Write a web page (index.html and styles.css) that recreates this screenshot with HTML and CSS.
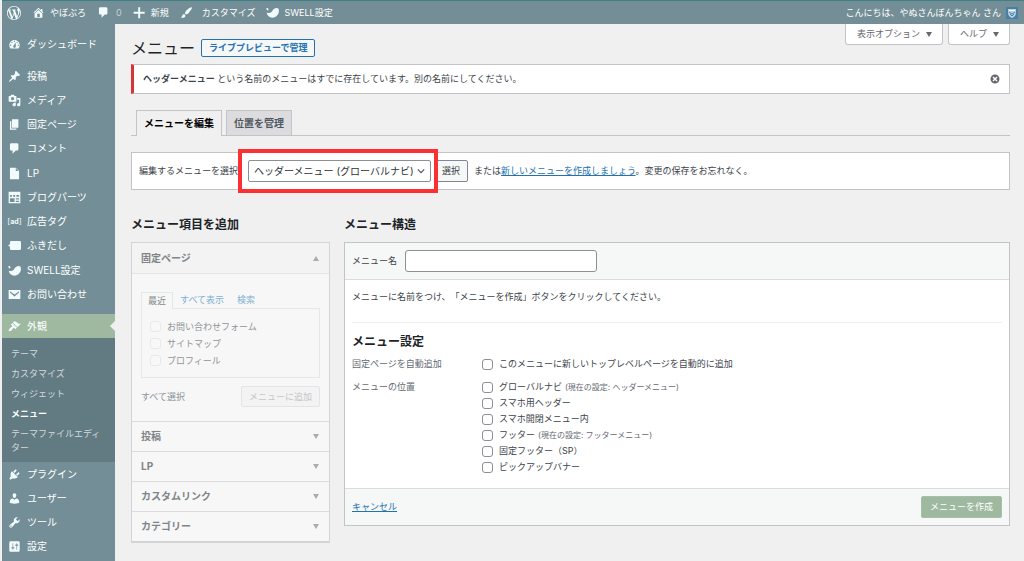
FILE: index.html
```html
<!DOCTYPE html>
<html lang="ja">
<head>
<meta charset="utf-8">
<title>メニュー</title>
<link rel="stylesheet" href="styles.css">
</head>
<body>
<svg class="sprite" aria-hidden="true">
  <symbol id="swell" viewBox="0 0 20 20"><path d="M0 4l3-1 1 3-2 1zM1 10c4 2 8 0 9-3 2-3 6-5 9-3 3 6-2 14-9 14-5 0-8-3-9-8z"/></symbol>
  <symbol id="comment" viewBox="0 0 20 20"><path d="M5 2h9c1.1 0 2 .9 2 2v7c0 1.1-.9 2-2 2h-2l-5 5v-5H5c-1.1 0-2-.9-2-2V4c0-1.1.9-2 2-2z"/></symbol>
</svg>
<header class="adminbar">
  <a class="bar-item" href="#" aria-label="WordPress"><svg class="icon icon-wp" viewBox="0 0 20 20"><path d="M20 10c0-5.51-4.49-10-10-10C4.48 0 0 4.49 0 10c0 5.52 4.48 10 10 10 5.51 0 10-4.48 10-10zM7.78 15.37L4.37 6.22c.55-.02 1.17-.08 1.17-.08.5-.06.44-1.13-.06-1.11 0 0-1.45.11-2.37.11-.18 0-.37 0-.58-.01C4.12 2.69 6.87 1.11 10 1.11c2.33 0 4.45.87 6.05 2.34-.68-.11-1.65.39-1.65 1.58 0 .74.45 1.36.9 2.1.35.61.55 1.36.55 2.46 0 1.49-1.4 5-1.4 5l-3.03-8.37c.54-.02.82-.17.82-.17.5-.05.44-1.25-.06-1.22 0 0-1.44.12-2.38.12-.87 0-2.33-.12-2.33-.12-.5-.03-.56 1.2-.06 1.22l.92.08 1.26 3.41zM17.41 10c.24-.64.74-1.87.43-4.25.7 1.29 1.05 2.71 1.05 4.25 0 3.29-1.73 6.24-4.4 7.78.97-2.59 1.94-5.2 2.92-7.78zM6.1 18.09C3.12 16.65 1.11 13.53 1.11 10c0-1.3.23-2.48.72-3.59C3.25 10.3 4.67 14.2 6.1 18.09zm4.03-6.63l2.58 6.98c-.86.29-1.76.45-2.71.45-.79 0-1.57-.11-2.29-.33.81-2.38 1.62-4.74 2.42-7.1z"/></svg></a>
  <a class="bar-item" href="#"><svg class="icon" viewBox="0 0 20 20"><path d="M16 8.5l1.53 1.53-1.06 1.06L10 4.6l-6.47 6.49-1.06-1.06L10 2.5l4 4v-2h2v4zm-6-2.46l6 5.99V18H4v-5.97zM12 17v-5H8v5h4z"/></svg>やぼぶろ</a>
  <a class="bar-item bar-comments" href="#"><svg class="icon"><use href="#comment"/></svg>0</a>
  <a class="bar-item" href="#"><svg class="icon" viewBox="0 0 20 20"><path d="M8 2h3v7h7v3h-7v7H8v-7H1V9h7z"/></svg>新規</a>
  <a class="bar-item bar-customize" href="#"><svg class="icon" viewBox="0 0 20 20"><path d="M18.33 3.57s.27-.8-.31-1.36c-.53-.52-1.22-.24-1.22-.24-.61.3-5.76 3.47-7.67 5.57-.86.96-2.06 3.79-1.09 4.82.92.98 3.96-.17 4.79-1 2.06-2.06 5.21-7.17 5.5-7.79zM1.4 17.65c2.37-1.56 1.46-3.41 3.23-4.64.93-.65 2.22-.62 3.08.29.63.67.8 2.57-.16 3.46-1.57 1.45-4 1.55-6.15.89z"/></svg>カスタマイズ</a>
  <a class="bar-item" href="#"><svg class="icon"><use href="#swell"/></svg>SWELL設定</a>
  <a class="bar-item bar-account" href="#">こんにちは、やぬさんぼんちゃん さん<svg class="avatar" viewBox="0 0 12 12"><rect width="12" height="12" fill="#477fa8"/><path d="M2 2h8v3c0 3-1 5-4 6C3 10 2 8 2 5z" fill="#b9d3df"/><path d="M3 3h6v1H3z" fill="#fff"/><path d="M3 5l3 2 3-2M4 7l2 2 2-2" fill="none" stroke="#477fa8"/></svg></a>
</header>
<div class="layout">
  <nav class="sidebar" aria-label="メインメニュー">
    <ul class="group">
      <li><a href="#"><svg class="icon" viewBox="0 0 20 20"><path d="M3.76 16h12.48c1.1-1.37 1.76-3.11 1.76-5 0-4.42-3.58-8-8-8s-8 3.58-8 8c0 1.89.66 3.63 1.76 5zM10 4c.55 0 1 .45 1 1s-.45 1-1 1-1-.45-1-1 .45-1 1-1zM6 6c.55 0 1 .45 1 1s-.45 1-1 1-1-.45-1-1 .45-1 1-1zm8 0c.55 0 1 .45 1 1s-.45 1-1 1-1-.45-1-1 .45-1 1-1zm-5.37 5.55L12 7v6c0 1.1-.9 2-2 2s-2-.9-2-2c0-.57.24-1.08.63-1.45zM4 10c.55 0 1 .45 1 1s-.45 1-1 1-1-.45-1-1 .45-1 1-1zm12 0c.55 0 1 .45 1 1s-.45 1-1 1-1-.45-1-1 .45-1 1-1z"/></svg>ダッシュボード</a></li>
    </ul>
    <div class="content-groups">
    <ul class="group">
      <li><a href="#"><svg class="icon" viewBox="0 0 20 20"><path d="M10.44 3.02l1.82-1.82 6.36 6.35-1.83 1.82c-1.05-.68-2.48-.57-3.41.36l-.75.75c-.92.93-1.04 2.35-.35 3.41l-1.83 1.82-2.41-2.41-2.8 2.79c-.42.42-3.38 2.71-3.8 2.29s1.86-3.39 2.28-3.81l2.79-2.79L4.1 9.36l1.83-1.82c1.05.69 2.48.57 3.4-.36l.75-.75c.93-.92 1.05-2.35.36-3.41z"/></svg>投稿</a></li>
      <li><a href="#"><svg class="icon" viewBox="0 0 20 20"><path d="M13 11V4c0-.55-.45-1-1-1h-1.67L9 1H5L3.67 3H2c-.55 0-1 .45-1 1v7c0 .55.45 1 1 1h10c.55 0 1-.45 1-1zM7 4.5c1.38 0 2.5 1.12 2.5 2.5S8.38 9.5 7 9.5 4.5 8.38 4.5 7 5.62 4.5 7 4.5zM14 6h5v10.5c0 1.38-1.12 2.5-2.5 2.5S14 17.88 14 16.5s1.12-2.5 2.5-2.5c.17 0 .34.02.5.05V9h-3V6zm-4 8.05V13h2v3.5c0 1.38-1.12 2.5-2.5 2.5S7 17.88 7 16.5 8.12 14 9.5 14c.17 0 .34.02.5.05z"/></svg>メディア</a></li>
      <li><a href="#"><svg class="icon" viewBox="0 0 20 20"><path d="M6 15V2h10v13H6zm-1 1h8v2H3V5h2v11z"/></svg>固定ページ</a></li>
      <li><a href="#"><svg class="icon"><use href="#comment"/></svg>コメント</a></li>
    </ul>
    <ul class="group">
      <li><a href="#"><svg class="icon" viewBox="0 0 20 20"><path fill-rule="evenodd" d="M12 1l5 5v13H3V1h9zm0 5h4l-4-4v4z"/></svg>LP</a></li>
      <li><a href="#"><svg class="icon" viewBox="0 0 20 20"><path fill-rule="evenodd" d="M1 1h18v18H1zM3 6v3h3V6zm5 0v3h3V6zm5 0v3h4V6zM3 11v6h7v-6zm9 0v2h5v-2zm0 4v2h5v-2z"/></svg>ブログパーツ</a></li>
      <li><a href="#"><span class="icon ad-mark">[<b>ad</b>]</span>広告タグ</a></li>
      <li><a href="#"><svg class="icon" viewBox="0 0 20 20"><path d="M5 3h13q2 0 2 2v10q0 2-2 2H5q-2 0-2-2v-3L0 10l3-2V5q0-2 2-2z"/></svg>ふきだし</a></li>
    </ul>
    <ul class="group">
      <li><a href="#"><svg class="icon"><use href="#swell"/></svg>SWELL設定</a></li>
      <li><a href="#"><svg class="icon" viewBox="0 0 20 20"><path fill-rule="evenodd" d="M1 3h18v14H1zM3 5v2l7 6 7-6V5l-7 5z"/></svg>お問い合わせ</a></li>
    </ul>
    </div>
    <a class="current" href="#"><svg class="icon" viewBox="0 0 20 20"><path d="M14.48 11.06L7.41 3.99l1.5-1.5c.5-.56 2.3-.47 3.51.32 1.21.8 1.43 1.28 2.91 2.1 1.18.64 2.45 1.26 4.45.85zm-.71.71L6.7 4.7 4.93 6.47c-.39.39-.39 1.02 0 1.41l1.06 1.06c.39.39.39 1.03 0 1.42-.6.6-1.43 1.11-2.21 1.69-.35.26-.7.53-1.01.84C1.43 14.23.4 16.08 1.4 17.07c.99 1 2.84-.03 4.18-1.36.31-.31.58-.66.85-1.02.57-.78 1.08-1.61 1.69-2.21.39-.39 1.02-.39 1.41 0l1.06 1.06c.39.39 1.02.39 1.41 0z"/></svg>外観</a>
    <ul class="submenu">
      <li><a href="#">テーマ</a></li>
      <li><a href="#">カスタマイズ</a></li>
      <li><a href="#">ウィジェット</a></li>
      <li><a class="active" href="#">メニュー</a></li>
      <li><a href="#">テーマファイルエディター</a></li>
    </ul>
    <ul class="group">
      <li><a href="#"><svg class="icon" viewBox="0 0 20 20"><path d="M13.11 4.36L9.87 7.6 8 5.73l3.24-3.24c.35-.34 1.05-.2 1.56.32.52.51.66 1.21.31 1.55zm-8 1.77l.91-1.12 9.01 9.01-1.19.84c-.71.71-2.63 1.16-3.82 1.16H6.14L4.9 17.26c-.59.59-1.54.59-2.12 0-.59-.58-.59-1.53 0-2.12l1.24-1.24v-3.88c0-1.13.4-3.19 1.09-3.89zm7.26 3.97l3.24-3.24c.34-.35 1.04-.21 1.55.31.52.51.66 1.21.31 1.55l-3.24 3.25z"/></svg>プラグイン</a></li>
      <li><a href="#"><svg class="icon" viewBox="0 0 20 20"><path d="M10 9.25c-2.27 0-2.73-3.44-2.73-3.44C7 4.02 7.82 2 9.97 2c2.16 0 2.98 2.02 2.71 3.81 0 0-.41 3.44-2.68 3.44zm0 2.57L12.72 10c2.39 0 4.52 2.33 4.52 4.53v2.49s-3.65 1.13-7.24 1.13c-3.65 0-7.24-1.13-7.24-1.13v-2.49c0-2.25 1.94-4.48 4.47-4.48z"/></svg>ユーザー</a></li>
      <li><a href="#"><svg class="icon" viewBox="0 0 20 20"><path d="M16.68 9.77c-1.34 1.34-3.3 1.67-4.95.99l-5.41 6.52c-.99.99-2.59.99-3.58 0s-.99-2.59 0-3.57l6.52-5.42c-.68-1.65-.35-3.61.99-4.95 1.28-1.28 3.12-1.62 4.72-1.06l-2.89 2.89 2.82 2.82 2.86-2.87c.53 1.58.18 3.39-1.08 4.65zM3.81 16.21c.4.39 1.04.39 1.43 0 .4-.4.4-1.04 0-1.43-.39-.4-1.03-.4-1.43 0-.39.39-.39 1.03 0 1.43z"/></svg>ツール</a></li>
      <li><a href="#"><svg class="icon" viewBox="0 0 20 20"><path d="M18 16V4c0-1.1-.9-2-2-2H4c-1.1 0-2 .9-2 2v12c0 1.1.9 2 2 2h12c1.1 0 2-.9 2-2zM8 11h1c.55 0 1 .45 1 1s-.45 1-1 1H8v1.5c0 .28-.22.5-.5.5s-.5-.22-.5-.5V13H6c-.55 0-1-.45-1-1s.45-1 1-1h1V5.5c0-.28.22-.5.5-.5s.5.22.5.5V11zm5-2h-1c-.55 0-1-.45-1-1s.45-1 1-1h1V5.5c0-.28.22-.5.5-.5s.5.22.5.5V7h1c.55 0 1 .45 1 1s-.45 1-1 1h-1v5.5c0 .28-.22.5-.5.5s-.5-.22-.5-.5V9z"/></svg>設定</a></li>
    </ul>
  </nav>
  <main class="main">
    <div class="top">
      <div class="title"><h1>メニュー</h1><a class="title-action" href="#">ライブプレビューで管理</a></div>
      <div class="screen-meta"><button type="button">表示オプション<i class="tri down"></i></button><button type="button">ヘルプ<i class="tri down"></i></button></div>
    </div>
    <div class="notice">
      <p><strong>ヘッダーメニュー</strong> という名前のメニューはすでに存在しています。別の名前にしてください。</p>
      <button class="dismiss" type="button" aria-label="閉じる"><svg viewBox="0 0 20 20"><path d="M10 1a9 9 0 1 1 0 18 9 9 0 0 1 0-18zm5 12l-3-3 3-3-2-2-3 3-3-3-2 2 3 3-3 3 2 2 3-3 3 3z"/></svg></button>
    </div>
    <nav class="tabs" aria-label="表示の切り替え"><a class="tab tab-on" href="#">メニューを編集</a><a class="tab" href="#">位置を管理</a></nav>
    <form class="manage">
      <label for="menu-select">編集するメニューを選択:</label>
      <span class="highlight"><select id="menu-select"><option>ヘッダーメニュー (グローバルナビ)</option></select><svg class="chevron" viewBox="0 0 10 10"><path d="M1 3l4 4 4-4"/></svg></span>
      <button class="select-btn" type="button">選択</button>
      <p>または<a href="#">新しいメニューを作成しましょう</a>。変更の保存をお忘れなく。</p>
    </form>
    <div class="columns">
      <section class="add">
        <h2>メニュー項目を追加</h2>
        <div class="accordion">
          <h3><button type="button">固定ページ<i class="tri up"></i></button></h3>
          <div class="acc-body">
            <div class="mini-tabs"><a class="mini-on" href="#">最近</a><a href="#">すべて表示</a><a href="#">検索</a></div>
            <div class="mini-panel">
              <label><input type="checkbox" disabled>お問い合わせフォーム</label>
              <label><input type="checkbox" disabled>サイトマップ</label>
              <label><input type="checkbox" disabled>プロフィール</label>
            </div>
            <div class="acc-actions"><span>すべて選択</span><button type="button" disabled>メニューに追加</button></div>
          </div>
          <h3><button type="button">投稿<i class="tri down"></i></button></h3>
          <h3><button type="button">LP<i class="tri down"></i></button></h3>
          <h3><button type="button">カスタムリンク<i class="tri down"></i></button></h3>
          <h3><button type="button">カテゴリー<i class="tri down"></i></button></h3>
        </div>
      </section>
      <section class="structure">
        <h2>メニュー構造</h2>
        <form class="editor">
          <div class="editor-head"><label for="menu-name">メニュー名</label><input id="menu-name" type="text"></div>
          <div class="editor-body">
            <p class="intro">メニューに名前をつけ、「メニューを作成」ボタンをクリックしてください。</p>
            <h3>メニュー設定</h3>
            <div class="setting">
              <span class="legend">固定ページを自動追加</span>
              <div class="options"><label><input type="checkbox">このメニューに新しいトップレベルページを自動的に追加</label></div>
            </div>
            <div class="setting">
              <span class="legend">メニューの位置</span>
              <div class="options">
                <label><input type="checkbox">グローバルナビ<small>(現在の設定: ヘッダーメニュー)</small></label>
                <label><input type="checkbox">スマホ用ヘッダー</label>
                <label><input type="checkbox">スマホ開閉メニュー内</label>
                <label><input type="checkbox">フッター<small>(現在の設定: フッターメニュー)</small></label>
                <label><input type="checkbox">固定フッター（SP）</label>
                <label><input type="checkbox">ピックアップバナー</label>
              </div>
            </div>
          </div>
          <div class="editor-foot"><a href="#">キャンセル</a><button type="button">メニューを作成</button></div>
        </form>
      </section>
    </div>
  </main>
</div>
</body>
</html>
```

FILE: styles.css
```css
* { box-sizing: border-box; }
body {
  display: flex;
  flex-direction: column;
  min-height: 100vh;
  margin: 0;
  padding-left: 2px;
  background: #f0f0f1;
  color: #3c434a;
  font: 9px/16px Inter, "Noto Sans CJK JP", sans-serif;
  text-spacing-trim: space-all;
}
h1, h2, h3, p, ul { margin: 0; padding: 0; }
ul { list-style: none; }
a { color: #2271b1; }
button, input, select { font: inherit; color: inherit; margin: 0; }
svg { display: block; fill: currentColor; }
.sprite { position: absolute; width: 0; height: 0; }
.icon { flex: none; width: 13px; height: 13px; color: #f1fbfd; }

.adminbar {
  display: flex;
  align-items: center;
  gap: 11px;
  height: 24px;
  padding: 0 6px 0 5px;
  border-top: 1px solid #3e8184;
  background: #738e96;
}
.bar-item { display: flex; align-items: center; gap: 5px; color: #fff; text-decoration: none; white-space: nowrap; }
.icon-wp { width: 14px; height: 14px; }
.bar-comments { color: #c3d1d5; gap: 6px; }
.bar-customize { gap: 9px; }
.bar-account { margin-left: auto; }
.avatar { width: 12px; height: 12px; }

.layout { display: flex; flex: 1; align-items: stretch; }
.sidebar { flex: none; width: 113px; padding-top: 8px; background: #738e96; font-size: 10px; }
.sidebar .group a, .current {
  display: flex;
  align-items: center;
  gap: 6px;
  height: 24px;
  padding-left: 6px;
  color: #fff;
  text-decoration: none;
}
.content-groups { display: flex; flex-direction: column; gap: 1px; padding: 8px 0; }
.ad-mark { display: flex; justify-content: center; font-size: 8px; line-height: 13px; }
.ad-mark b { font-size: 7px; }
.sidebar .current { position: relative; background: #9eb99f; }
.current::after {
  content: "";
  position: absolute;
  right: 0;
  top: 7px;
  border: 5px solid transparent;
  border-right-color: #f0f0f1;
  border-left: 0;
}
.submenu { padding: 6px 8px 4px 9px; background: #627b82; font-size: 9px; line-height: 14px; }
.submenu a { display: block; padding: 3px 0; color: #d1dadd; text-decoration: none; }
.submenu .active { color: #fff; font-weight: 700; }

.main { flex: 1; min-width: 0; padding: 0 14px 17px 16px; }
.top { display: flex; justify-content: space-between; align-items: flex-start; }
.title { display: flex; align-items: center; gap: 6px; padding-top: 12px; }
h1 { color: #1d2327; font-size: 16px; line-height: 24px; font-weight: 400; }
.title-action {
  padding: 0 7px;
  border: 1px solid #2271b1;
  border-radius: 2px;
  background: #f6f7f7;
  font-weight: 700;
  text-decoration: none;
}
.screen-meta { display: flex; gap: 5px; }
.screen-meta button {
  display: flex;
  align-items: center;
  gap: 6px;
  height: 21px;
  padding: 0 10px 0 11px;
  border: 1px solid #c3c4c7;
  border-top: 0;
  border-radius: 0 0 3px 3px;
  background: #fff;
  color: #646970;
}
.tri { flex: none; border: 3px solid transparent; }
.down { border-top: 5px solid currentColor; border-bottom: 0; }
.up { border-bottom: 5px solid currentColor; border-top: 0; }

.notice {
  display: flex;
  align-items: center;
  justify-content: space-between;
  margin-top: 4px;
  padding: 6px 9px;
  border: 1px solid #c3c4c7;
  border-left: 3px solid #d63638;
  background: #fff;
}
.dismiss { padding: 0; border: 0; background: none; color: #646970; }
.dismiss svg { width: 10px; height: 10px; }

.tabs { display: flex; gap: 4px; margin-top: 16px; padding-left: 5px; border-bottom: 1px solid #c3c4c7; }
.tab {
  padding: 4px 7px;
  border: 1px solid #c3c4c7;
  border-bottom: 0;
  background: #dcdcde;
  color: #50575e;
  font-size: 10px;
  font-weight: 700;
  text-decoration: none;
}
.tab-on { margin-bottom: -1px; background: #f0f0f1; color: #000; }

.manage {
  display: flex;
  align-items: center;
  margin-top: 16px;
  padding: 7px;
  border: 1px solid #c3c4c7;
  background: #fff;
}
.manage label { flex: none; width: 109px; white-space: nowrap; }
.highlight { position: relative; }
.highlight::after {
  content: "";
  position: absolute;
  inset: -11px -7px -11px -10px;
  border: 4px solid #fc3032;
  pointer-events: none;
}
.manage select {
  display: block;
  width: 183px;
  height: 22px;
  padding: 0 12px 0 5px;
  appearance: none;
  border: 1px solid #8c8f94;
  border-radius: 2px;
  background: #fff;
  color: #2c3338;
  font-size: 10px;
}
.chevron { position: absolute; right: 6px; top: 7px; width: 8px; height: 8px; fill: none; stroke: #50575e; stroke-width: 1.5; }
.select-btn { height: 22px; margin: 0 6px 0 3px; padding: 0 7px; border: 1px solid #7e8993; border-radius: 2px; background: #f6f7f7; }

.columns { display: grid; grid-template-columns: 199px minmax(0, 1fr); gap: 14px; align-items: start; margin-top: 27px; }
h2 { color: #1d2327; font-size: 12px; line-height: 16px; font-weight: 700; }
.accordion { margin-top: 9px; border: 1px solid #d3d4d6; border-bottom-width: 2px; background: #f7f7f7; color: #8f9498; }
.accordion h3 { border-top: 1px solid #dcdcde; font-size: 10px; }
.accordion h3:first-child { border-top: 0; background: #f3f3f3; }
.accordion h3 button {
  display: flex;
  align-items: center;
  justify-content: space-between;
  width: 100%;
  padding: 7px 10px 7px 9px;
  border: 0;
  background: none;
  color: #808488;
  font-weight: 700;
}
.accordion h3:not(:first-child) button { padding-top: 6px; }
.accordion .tri { color: #aaacae; }
.acc-body { padding: 18px 9px 14px; border-top: 1px solid #e3e4e5; }
.mini-tabs { display: flex; gap: 13px; }
.mini-tabs a { color: #80b0d3; text-decoration: none; }
.mini-tabs .mini-on { margin: 0 -6px -1px 0; padding: 0 6px; border: 1px solid #e6e7e8; border-bottom: 0; background: #f7f7f7; color: #858a8e; }
.mini-panel { padding: 9px 8px 8px; border: 1px solid #e6e7e8; }
.mini-panel label { display: flex; align-items: center; gap: 6px; height: 17px; }
input[type="checkbox"] { flex: none; width: 11px; height: 11px; appearance: none; border: 1px solid #8c8f94; border-radius: 3px; background: #fff; }
.mini-panel input[type="checkbox"] { border-color: #e8e9ea; background: #f8f8f8; }
.acc-actions { display: flex; align-items: center; justify-content: space-between; margin-top: 8px; }
.acc-actions button { height: 21px; padding: 0 7px; border: 1px solid #e3e4e5; border-radius: 2px; background: #f3f3f4; color: #c4c6c8; }

.editor { margin-top: 9px; border: 1px solid #c3c4c7; background: #fff; }
.editor-head { display: flex; align-items: center; gap: 8px; padding: 7px; border-bottom: 1px solid #dcdcde; background: #f6f7f7; }
.editor-head input { width: 192px; height: 22px; padding: 0 6px; border: 1px solid #8c8f94; border-radius: 3px; background: #fff; }
.editor-body { padding: 9px 7px 13px; }
.intro { padding-bottom: 17px; border-bottom: 1px solid #f0f0f1; }
.editor h3 { margin: 11px 0 6px; color: #1d2327; font-size: 12px; line-height: 16px; }
.setting { display: grid; grid-template-columns: 130px minmax(0, 1fr); margin-bottom: 7px; }
.setting:last-child { margin-bottom: 0; }
.legend { color: #646970; }
.options label { display: flex; align-items: center; height: 16px; }
.options input { margin-right: 6px; }
.options small { margin-left: 3px; color: #646970; font-size: 8px; }
.editor-foot { display: flex; align-items: center; justify-content: space-between; padding: 7px; border-top: 1px solid #dcdcde; background: #f6f7f7; }
.editor-foot button { height: 22px; padding: 0 8px; border: 1px solid #a7bfa8; border-radius: 2px; background: #9eb99f; color: #fff; }
```
